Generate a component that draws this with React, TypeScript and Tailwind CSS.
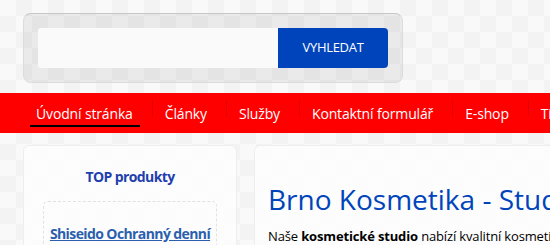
const navItems = ['Úvodní stránka', 'Články', 'Služby', 'Kontaktní formulář', 'E-shop', 'Tipy'];

const App = () => {
  return (
    <div className="h-[245px] overflow-hidden bg-[#f9f9f9] bg-[image:conic-gradient(#f3f3f3_25%,#f9f9f9_0_50%,#f3f3f3_0_75%,#f9f9f9_0)] bg-size-[32px_32px] font-['Open_Sans',sans-serif]">
      <div className="pt-[13px] pl-[23px] h-[93px]">
        <div className="flex w-[380px] h-[70px] rounded-[8px] bg-black/[0.06] border border-[#dcdcdc] border-t-[#c8c8c8] p-[14px]">
          <input className="flex-1 h-[40px] rounded-l-[3px] bg-[#fafafa] outline-none px-2 text-sm" />
          <button className="w-[110px] h-[40px] rounded-r-[4px] bg-[#0044bb] text-white text-[13px] tracking-[-0.3px]">VYHLEDAT</button>
        </div>
      </div>

      <nav className="h-[40px] bg-[#ff0000] flex pl-[24px] whitespace-nowrap">
        {navItems.map((item, i) => (
          <div key={item} className="flex h-full">
            <a className="relative h-full pl-[12px] pr-[19px] pt-[2px] text-white text-[14px] tracking-[-0.15px] leading-[38px]">
              {item}
              {i === 0 && <span className="absolute left-[6px] right-[12px] bottom-[6px] h-[2px] bg-black" />}
            </a>
            <span className="w-px h-[17px] mt-[7px] bg-[#e30000]" />
          </div>
        ))}
      </nav>

      <div className="flex gap-[17px] pl-[23px] pt-[12px]">
        <aside className="w-[214px] h-[120px] shrink-0 rounded-[6px] bg-white/70 border border-[#eeeeee] px-[19px] pt-[20px]">
          <h3 className="text-center font-bold text-[14px] tracking-[-0.6px] text-[#1f3fae]">TOP produkty</h3>
          <div className="mt-[14px] h-[60px] rounded-[5px] border border-dashed border-[#e2e2e2] pt-[19px] text-center whitespace-nowrap">
            <a className="font-bold text-[14px] tracking-[-0.6px] text-[#2b5fae] underline">Shiseido Ochranný denní</a>
          </div>
        </aside>
        <main className="flex-1 min-w-[400px] h-[120px] rounded-[6px] bg-white/70 border border-[#eeeeee] pl-[13px] pt-[33px] whitespace-nowrap">
          <h1 className="text-[28px] text-[#0044bb] leading-[40px]">Brno Kosmetika - Studio krásy</h1>
          <p className="text-[13px] tracking-[-0.15px] text-black mt-[8px]">
            Naše <b>kosmetické studio</b> nabízí kvalitní kosmetické služby
          </p>
        </main>
      </div>
    </div>
  );
};

export default App;
